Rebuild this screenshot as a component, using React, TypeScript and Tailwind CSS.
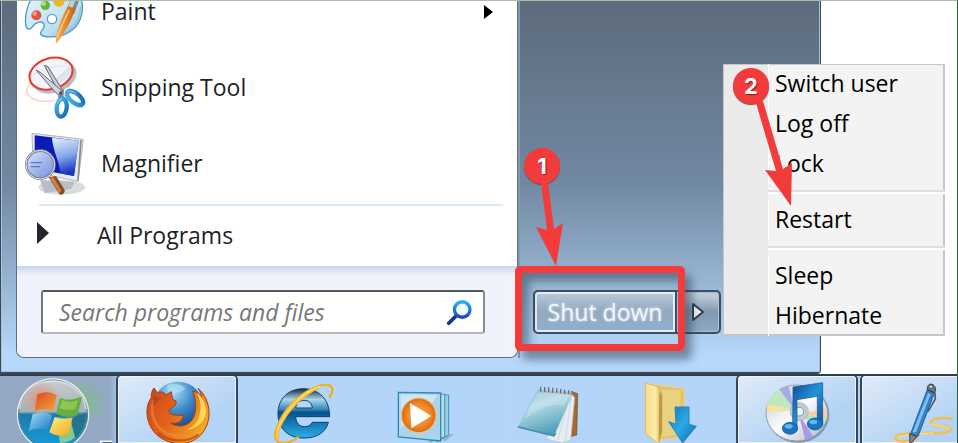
import type { ReactNode } from "react";

type IconProps = { className?: string };

function PaintIcon({ className }: IconProps) {
  return (
    <svg viewBox="72 -78 192 228" className={className} aria-hidden="true">
      <defs>
        <linearGradient id="palette" x1="0" y1="0" x2="1" y2="1">
          <stop offset="0" stopColor="#e6f5fc" />
          <stop offset="0.6" stopColor="#c3e2f3" />
          <stop offset="1" stopColor="#8fc3e2" />
        </linearGradient>
        <linearGradient id="brush" x1="0" y1="0" x2="1" y2="0">
          <stop offset="0" stopColor="#f9b04b" />
          <stop offset="1" stopColor="#c9650f" />
        </linearGradient>
      </defs>
      <path
        d="M104 -20C84 8 72 48 78 78C82 92 92 88 98 80C106 66 128 60 132 74C136 88 118 92 122 102C132 116 180 112 204 98C238 80 252 44 246 6C242 -30 140 -50 104 -20Z"
        fill="url(#palette)"
        stroke="#4f9ac4"
        strokeWidth="4"
      />
      <path d="M176 106C214 94 240 62 242 20" fill="none" stroke="#9cc8de" strokeWidth="6" />
      <circle cx="156" cy="57" r="14" fill="#fff" stroke="#5ba1c8" strokeWidth="4" />
      <circle cx="109" cy="46" r="15" fill="#e2513c" />
      <circle cx="104" cy="41" r="7" fill="#f39a86" />
      <circle cx="136" cy="16" r="14" fill="#67b33c" />
      <circle cx="131" cy="11" r="7" fill="#b4df86" />
      <circle cx="177" cy="3" r="17" fill="#f7b511" />
      <path d="M215 -10L238 0L222 42L198 32Z" fill="#7e8796" />
      <path d="M216 -10L228 -4L212 38L200 32Z" fill="#c6ccd5" />
      <path d="M204 18L226 26C216 60 190 106 168 131C164 104 184 52 204 18Z" fill="url(#brush)" />
      <path d="M208 30C194 58 178 90 172 114" fill="none" stroke="#ffd08a" strokeWidth="4" />
    </svg>
  );
}

function SnippingIcon({ className }: IconProps) {
  return (
    <svg viewBox="72 150 192 228" className={className} aria-hidden="true">
      <defs>
        <linearGradient id="handle" x1="0" y1="0" x2="1" y2="1">
          <stop offset="0" stopColor="#4cb7ea" />
          <stop offset="1" stopColor="#0e6db4" />
        </linearGradient>
      </defs>
      <ellipse cx="144" cy="268" rx="64" ry="36" fill="#fff" stroke="#f6cfc0" strokeWidth="4" transform="rotate(-5 144 268)" />
      <ellipse cx="163" cy="231" rx="69" ry="47" fill="#8a8f98" opacity="0.6" transform="rotate(-20 163 231)" />
      <ellipse cx="153" cy="221" rx="66" ry="46" fill="#f2f4fa" stroke="#e4392f" strokeWidth="6" transform="rotate(-17 153 221)" />
      <path d="M150 250L212 196C218 216 202 242 170 256Z" fill="#dfe5f1" />
      <path d="M98 224C130 206 170 196 208 198" fill="none" stroke="#e3e6ee" strokeWidth="4" />
      <path d="M196 276L232 320L250 322" fill="none" stroke="#b9c0c8" strokeWidth="6" opacity="0.6" />
      <path d="M133 196L144 200L190 274L180 284Z" fill="#c9cdd2" stroke="#63686f" strokeWidth="3" />
      <path d="M108 210L122 218L190 276L178 288L160 270Z" fill="#d3d6da" stroke="#63686f" strokeWidth="3" />
      <path d="M178 274L192 268L190 296L174 294Z" fill="#7c858f" />
      <ellipse cx="185" cy="323" rx="15" ry="27" fill="#fff" stroke="url(#handle)" strokeWidth="13" transform="rotate(7 185 323)" />
      <ellipse cx="225" cy="294" rx="14" ry="29" fill="#fff" stroke="url(#handle)" strokeWidth="13" transform="rotate(-52 225 294)" />
      <circle cx="182" cy="280" r="4" fill="#474d55" />
      <path d="M173 310C174 302 180 298 186 298" fill="none" stroke="#9ddcf8" strokeWidth="3" />
      <path d="M202 276C210 270 222 274 230 282" fill="none" stroke="#9ddcf8" strokeWidth="3" />
    </svg>
  );
}

function MagnifierIcon({ className }: IconProps) {
  return (
    <svg viewBox="72 378 192 228" className={className} aria-hidden="true">
      <defs>
        <linearGradient id="screen" x1="0" y1="0" x2="0.2" y2="1">
          <stop offset="0" stopColor="#e6f3fd" />
          <stop offset="0.55" stopColor="#86a8e8" />
          <stop offset="1" stopColor="#1736c4" />
        </linearGradient>
        <linearGradient id="lens" x1="0" y1="0" x2="1" y2="1">
          <stop offset="0" stopColor="#d7e9fb" />
          <stop offset="1" stopColor="#7489dc" />
        </linearGradient>
      </defs>
      <ellipse cx="185" cy="562" rx="70" ry="22" fill="#d9dbde" />
      <path d="M120 540L224 546L214 566L134 580Z" fill="#b9bec4" />
      <path d="M96 400L250 418L234 544L100 516Z" fill="#e8eaec" stroke="#aeb4b9" strokeWidth="3" />
      <path d="M243 420L234 542" stroke="#858d94" strokeWidth="5" />
      <path d="M104 406L236 422L222 528L104 506Z" fill="#0b1cb6" />
      <path d="M156 413L236 422L222 528L182 520C176 480 158 448 156 413Z" fill="url(#screen)" />
      <path d="M146 532L168 528L194 570C196 580 184 588 178 582Z" fill="#8f4b1e" />
      <path d="M150 534L160 532L184 572L178 578Z" fill="#c98554" />
      <circle cx="121" cy="494" r="42" fill="url(#lens)" stroke="#7c858f" strokeWidth="8" />
      <circle cx="121" cy="494" r="43" fill="none" stroke="#dfe4e9" strokeWidth="3" />
      <path d="M92 488H126M92 500H120" stroke="#6173cf" strokeWidth="4" />
    </svg>
  );
}

function SearchIcon({ className }: IconProps) {
  return (
    <svg viewBox="560 358 80 80" className={className} aria-hidden="true">
      <defs>
        <linearGradient id="glass" x1="0" y1="0" x2="0" y2="1">
          <stop offset="0" stopColor="#27b4ee" />
          <stop offset="1" stopColor="#2145c4" />
        </linearGradient>
      </defs>
      <path d="M590 408L568 430" stroke="#1b3687" strokeWidth="11" strokeLinecap="round" />
      <circle cx="608" cy="389" r="23" fill="#f2fafe" stroke="url(#glass)" strokeWidth="10" />
    </svg>
  );
}

function StartOrb({ className }: IconProps) {
  return (
    <svg viewBox="0 33 336 201" className={className} aria-hidden="true">
      <defs>
        <linearGradient id="orb" x1="0" y1="0" x2="0" y2="1">
          <stop offset="0" stopColor="#c9cdd0" />
          <stop offset="0.46" stopColor="#a3b3b6" />
          <stop offset="0.5" stopColor="#1a7bab" />
          <stop offset="1" stopColor="#14a0dd" />
        </linearGradient>
        <radialGradient id="orbGreen">
          <stop offset="0" stopColor="#77c46a" stopOpacity="0.7" />
          <stop offset="1" stopColor="#77c46a" stopOpacity="0" />
        </radialGradient>
        <radialGradient id="orbRed">
          <stop offset="0" stopColor="#f0866a" stopOpacity="0.8" />
          <stop offset="1" stopColor="#f0866a" stopOpacity="0" />
        </radialGradient>
        <linearGradient id="flagRed" x1="0" y1="0" x2="1" y2="1">
          <stop offset="0" stopColor="#d84a20" />
          <stop offset="1" stopColor="#f7a23c" />
        </linearGradient>
        <linearGradient id="flagBlue" x1="0" y1="0" x2="1" y2="1">
          <stop offset="0" stopColor="#a6ddf7" />
          <stop offset="1" stopColor="#1476c6" />
        </linearGradient>
        <linearGradient id="flagYellow" x1="0" y1="0" x2="1" y2="1">
          <stop offset="0" stopColor="#fff08a" />
          <stop offset="1" stopColor="#f2a516" />
        </linearGradient>
      </defs>
      <circle cx="248" cy="112" r="70" fill="url(#orbGreen)" />
      <circle cx="159" cy="148" r="107" fill="url(#orb)" stroke="#e6edf2" strokeWidth="4" />
      <circle cx="159" cy="148" r="103" fill="none" stroke="#5b7f8e" strokeWidth="3" />
      <circle cx="122" cy="102" r="56" fill="url(#orbRed)" />
      <path d="M170 156C206 166 236 150 258 142C258 190 226 234 180 234Z" fill="#8fd08c" opacity="0.9" />
      <path d="M210 160L258 142C260 170 246 200 226 220Z" fill="#23758f" />
      <path d="M112 88C134 78 152 80 170 90L160 138C142 130 124 130 104 138Z" fill="url(#flagRed)" />
      <path d="M180 98C202 108 224 104 248 92L232 150C210 160 190 156 168 146Z" fill="#67ad45" />
      <path d="M186 104C200 112 220 112 234 104L226 132C208 138 192 134 178 130Z" fill="#8cc84a" />
      <path d="M98 148C120 138 138 140 156 150L146 198C126 188 106 190 86 198Z" fill="url(#flagBlue)" />
      <path d="M164 156C182 164 202 164 218 158L206 206C186 216 164 212 148 202Z" fill="url(#flagYellow)" />
      <path d="M58 132C64 72 108 48 158 48C208 48 252 76 258 132" fill="none" stroke="#fff" strokeWidth="6" opacity="0.5" />
      <path d="M302 234V229H346" fill="none" stroke="#eef3f8" strokeWidth="5" />
      <path d="M308 234H346" stroke="#4f5760" strokeWidth="5" />
    </svg>
  );
}

function FirefoxIcon({ className }: IconProps) {
  return (
    <svg viewBox="354 33 354 201" className={className} aria-hidden="true">
      <defs>
        <radialGradient id="globe" cx="0.4" cy="0.2" r="0.9">
          <stop offset="0" stopColor="#a5def8" />
          <stop offset="0.45" stopColor="#3a87c8" />
          <stop offset="1" stopColor="#0c2c6c" />
        </radialGradient>
        <linearGradient id="fox" x1="0" y1="0" x2="1" y2="0.5">
          <stop offset="0" stopColor="#c8481a" />
          <stop offset="0.5" stopColor="#e2621b" />
          <stop offset="1" stopColor="#f5a51f" />
        </linearGradient>
      </defs>
      <circle cx="534" cy="126" r="76" fill="url(#globe)" />
      <path d="M502 60C520 54 546 58 556 70C548 84 524 80 518 92C510 86 498 76 502 60Z" fill="#b7e5f8" opacity="0.6" />
      <path
        d="M462 69L472 84C482 78 492 80 498 90L514 80C518 92 512 104 528 108C532 122 514 128 506 136C512 156 534 148 550 152C548 170 530 178 512 174C540 192 574 182 584 148C590 124 586 98 578 78C592 80 600 92 604 98C604 88 600 78 594 70C616 88 632 124 626 160C618 208 582 236 538 236C484 234 444 196 441 146C440 124 446 108 454 98C452 88 456 76 462 69Z"
        fill="url(#fox)"
        stroke="#a63b16"
        strokeWidth="3"
      />
      <path d="M462 106C450 130 456 172 486 196C514 218 556 218 582 194" fill="none" stroke="#f28a3a" strokeWidth="8" opacity="0.6" />
      <path d="M590 82C602 106 606 132 596 158C590 176 574 190 560 194C590 192 612 172 618 144C620 118 606 96 590 82Z" fill="#ffd75c" />
      <path d="M474 204C504 230 560 236 596 208" fill="none" stroke="#b94413" strokeWidth="7" opacity="0.7" />
      <path d="M462 83L468 96L486 100C476 104 468 116 460 124C456 112 460 96 462 83Z" fill="#a93a19" opacity="0.5" />
    </svg>
  );
}

function ExplorerIcon({ className }: IconProps) {
  return (
    <svg viewBox="-24 33 354 201" className={className} aria-hidden="true">
      <defs>
        <linearGradient id="ie" x1="0" y1="0" x2="0" y2="1">
          <stop offset="0" stopColor="#10283e" />
          <stop offset="0.22" stopColor="#acd4ec" />
          <stop offset="0.42" stopColor="#3587ba" />
          <stop offset="0.48" stopColor="#07518d" />
          <stop offset="1" stopColor="#2bafe8" />
        </linearGradient>
      </defs>
      <path
        fillRule="evenodd"
        d="M161 71C207 71 239 104 239 155H137C138 176 150 185 164 185C176 185 182 180 187 172H235C228 202 200 219 162 219C112 219 84 188 84 146C84 102 114 71 161 71ZM137 129H187C185 114 177 106 162 106C148 106 139 114 137 129Z"
        fill="url(#ie)"
        stroke="#0b3f70"
        strokeWidth="3"
      />
      <path
        d="M238 98C252 78 250 62 232 60C196 56 130 100 98 152C76 190 68 220 84 230C102 240 126 230 146 216"
        fill="none"
        stroke="#f2b021"
        strokeWidth="7"
      />
      <path d="M206 66C176 78 136 108 108 148C90 174 78 202 82 222" fill="none" stroke="#f7bd33" strokeWidth="11" />
      <path d="M212 64C180 72 136 104 108 146C90 172 78 200 82 216" fill="none" stroke="#ffe27a" strokeWidth="4" />
    </svg>
  );
}

function MediaPlayerIcon({ className }: IconProps) {
  return (
    <svg viewBox="348 33 354 201" className={className} aria-hidden="true">
      <defs>
        <radialGradient id="media">
          <stop offset="0" stopColor="#f9b25c" />
          <stop offset="0.7" stopColor="#ee8424" />
          <stop offset="1" stopColor="#db6a10" />
        </radialGradient>
      </defs>
      <path d="M570 212L614 206L584 230Z" fill="#7e9fb6" opacity="0.6" />
      <path d="M552 86L596 90V210L560 230Z" fill="#9ccde0" stroke="#3f93b8" strokeWidth="3" />
      <path d="M530 84L584 88V216L540 230Z" fill="#b5deed" stroke="#3f93b8" strokeWidth="3" />
      <path d="M445 82L572 84V228L445 216Z" fill="#a9d4e9" stroke="#3589b0" strokeWidth="4" />
      <path d="M452 88L562 90L548 114L452 190Z" fill="#cae7f4" />
      <circle cx="506" cy="151" r="52" fill="url(#media)" stroke="#f6c48d" strokeWidth="3" />
      <path d="M480 114L544 153L484 190Z" fill="#fff" />
    </svg>
  );
}

function NotepadIcon({ className }: IconProps) {
  return (
    <svg viewBox="0 33 354 201" className={className} aria-hidden="true">
      <defs>
        <linearGradient id="note" x1="0" y1="0" x2="0.4" y2="1">
          <stop offset="0" stopColor="#6ab3c4" />
          <stop offset="0.4" stopColor="#b7dde6" />
          <stop offset="1" stopColor="#509fb8" />
        </linearGradient>
      </defs>
      <path d="M246 80L263 86L260 210L236 216Z" fill="#a8682f" stroke="#6e4220" strokeWidth="2" />
      <path d="M240 80L254 98L242 226L216 234L168 222Z" fill="#e6ecef" stroke="#b4c0c9" strokeWidth="2" />
      <path d="M244 92L226 228M236 100L204 226" stroke="#c3d0d8" strokeWidth="2" />
      <path d="M144 75L248 86L192 213L84 186Z" fill="url(#note)" stroke="#9cc3ce" strokeWidth="2" />
      <path d="M144 79L240 88L222 122C170 112 140 140 104 160Z" fill="#d0e9ef" opacity="0.4" />
      <path d="M84 186L192 213L198 204" fill="none" stroke="#3f8ba6" strokeWidth="4" />
      <path d="M148 78L248 86" stroke="#b5bac0" strokeWidth="8" />
      <path
        d="M152 80V65M164 81V66M176 82V67M188 83V68M200 84V70M212 85V72M224 87V74M236 88V76M246 90V78"
        stroke="#6a7078"
        strokeWidth="4"
      />
    </svg>
  );
}

function DownloadsIcon({ className }: IconProps) {
  return (
    <svg viewBox="372 33 354 201" className={className} aria-hidden="true">
      <defs>
        <linearGradient id="folder" x1="0" y1="0" x2="1" y2="0">
          <stop offset="0" stopColor="#f6dc86" />
          <stop offset="0.6" stopColor="#fbecab" />
          <stop offset="1" stopColor="#d3ab4e" />
        </linearGradient>
        <linearGradient id="down" x1="0" y1="0" x2="1" y2="1">
          <stop offset="0" stopColor="#1c76b6" />
          <stop offset="0.5" stopColor="#29a9e8" />
          <stop offset="1" stopColor="#1267ae" />
        </linearGradient>
      </defs>
      <path d="M482 56L583 71V215L500 226Z" fill="#e4c36b" stroke="#ecd58d" strokeWidth="3" />
      <path d="M516 74L572 76V208L516 216Z" fill="#e9d182" />
      <path d="M466 54L500 64C514 74 518 88 516 106V200L506 238L466 204Z" fill="url(#folder)" stroke="#dfbd64" strokeWidth="3" />
      <path d="M508 80L516 92V200L506 232Z" fill="#c1973b" />
      <path d="M555 126H597V178L619 184L578 234L536 170L558 178Z" fill="url(#down)" stroke="#2b83bc" strokeWidth="3" />
    </svg>
  );
}

function ITunesIcon({ className }: IconProps) {
  return (
    <svg viewBox="54 33 354 201" className={className} aria-hidden="true">
      <defs>
        <linearGradient id="disc" x1="0" y1="0" x2="1" y2="1">
          <stop offset="0" stopColor="#c5ccd2" />
          <stop offset="0.5" stopColor="#fafbfc" />
          <stop offset="1" stopColor="#aeb8c1" />
        </linearGradient>
        <linearGradient id="noteBlue" x1="0" y1="0" x2="1" y2="1">
          <stop offset="0" stopColor="#104f98" />
          <stop offset="0.5" stopColor="#2592dc" />
          <stop offset="1" stopColor="#0d4d9c" />
        </linearGradient>
      </defs>
      <ellipse cx="234" cy="148" rx="94" ry="86" fill="#61717f" opacity="0.6" />
      <ellipse cx="230" cy="144" rx="92" ry="84" fill="url(#disc)" stroke="#97a2ac" strokeWidth="3" />
      <path d="M224 136L142 116C148 98 162 82 178 73Z" fill="#bce9c0" />
      <path d="M224 136L178 73L206 62Z" fill="#a9a9ea" />
      <path d="M224 136L142 116L140 142Z" fill="#f4e3a3" />
      <path d="M236 148L320 130L322 158Z" fill="#f5cfa4" />
      <path d="M236 148L322 158L304 194Z" fill="#b7e5bb" />
      <path d="M236 148L280 214L256 226Z" fill="#a999e4" />
      <circle cx="238" cy="140" r="27" fill="#c4cbd2" stroke="#98a5b0" strokeWidth="2" />
      <circle cx="238" cy="140" r="13" fill="#ebf5fb" stroke="#8998a5" strokeWidth="3" />
      <path d="M219 66L308 53V180H292V94L231 104V190H218Z" fill="url(#noteBlue)" stroke="#174f8b" strokeWidth="2" />
      <ellipse cx="210" cy="190" rx="23" ry="18" fill="#1674c2" stroke="#104c88" strokeWidth="2" />
      <ellipse cx="285" cy="177" rx="23" ry="18" fill="#1674c2" stroke="#104c88" strokeWidth="2" />
      <ellipse cx="206" cy="184" rx="12" ry="7" fill="#5eb9ee" />
      <ellipse cx="280" cy="171" rx="12" ry="7" fill="#5eb9ee" />
    </svg>
  );
}

function JournalIcon({ className }: IconProps) {
  return (
    <svg viewBox="426 33 354 201" className={className} aria-hidden="true">
      <path
        d="M694 162C664 154 630 164 632 174C636 186 690 180 692 194C690 210 628 202 586 204C546 206 520 212 526 220C532 232 562 232 592 222"
        fill="none"
        stroke="#f5bf52"
        strokeWidth="8"
        strokeLinecap="round"
      />
      <path d="M634 176C650 184 680 182 688 192M534 216C550 206 600 206 640 204" fill="none" stroke="#ffdd75" strokeWidth="4" />
      <path d="M622 74L644 82L594 214L572 226L572 206Z" fill="#347fca" stroke="#2f5c92" strokeWidth="3" />
      <path d="M624 84L632 88L588 202L578 202Z" fill="#78c3f2" />
      <path d="M622 74C622 58 630 54 640 60C648 66 648 74 644 84Z" fill="#697078" stroke="#34383e" strokeWidth="3" />
      <path d="M645 84L646 102L624 140" fill="none" stroke="#565b62" strokeWidth="5" />
      <path d="M569 206L590 214L570 240Z" fill="#7c8791" stroke="#353c45" strokeWidth="3" />
      <path d="M629 64L636 66" stroke="#e4eaee" strokeWidth="5" />
    </svg>
  );
}

const programs = [
  { name: "Paint", icon: PaintIcon, submenu: true },
  { name: "Snipping Tool", icon: SnippingIcon, submenu: false },
  { name: "Magnifier", icon: MagnifierIcon, submenu: false },
];

const powerGroups = [
  ["Switch user", "Log off", "Lock"],
  ["Restart"],
  ["Sleep", "Hibernate"],
];

const taskbarItems = [
  { name: "Firefox", icon: FirefoxIcon, open: true },
  { name: "Internet Explorer", icon: ExplorerIcon, open: false },
  { name: "Media Player", icon: MediaPlayerIcon, open: false },
  { name: "Notepad", icon: NotepadIcon, open: false },
  { name: "Downloads", icon: DownloadsIcon, open: false },
  { name: "iTunes", icon: ITunesIcon, open: true },
  { name: "Journal", icon: JournalIcon, open: true },
];

function StepBadge({ children }: { children: ReactNode }) {
  return (
    <span className="flex size-9 items-center justify-center rounded-full bg-[#f43b3b] font-[Inter,sans-serif] text-[22px] leading-none font-bold text-white shadow-[0_1px_1px_#7a4a4a] [text-shadow:1px_1px_1px_#8a2020]">
      {children}
    </span>
  );
}

function ProgramList() {
  return (
    <div className="flex min-w-0 flex-1 flex-col rounded-b-lg border-x border-b border-[#5d6f80] bg-white">
      {/* the list is scrolled, so the first row is cut by the top edge */}
      <ul className="-mt-[26px]">
        {programs.map(({ name, icon: Icon, submenu }) => (
          <li key={name}>
            <button className="flex h-[76px] w-full items-center gap-[13px] pr-6 pl-[7px] text-left">
              <Icon className="h-[76px] w-16 shrink-0" />
              <span className="flex-1 pb-[2px] leading-6">{name}</span>
              {submenu && (
                <svg viewBox="0 0 9 14" className="h-[14px] w-[9px]" aria-hidden="true">
                  <path d="M0 0L9 7L0 14Z" fill="#000" />
                </svg>
              )}
            </button>
          </li>
        ))}
      </ul>
      <hr className="mt-[2px] mr-[14px] ml-[22px] border-t-2 border-[#dbe8f8]" />
      <button className="flex h-[60px] items-center gap-12 pl-5 text-left">
        <svg viewBox="0 0 12 22" className="mb-[6px] h-[22px] w-3" aria-hidden="true">
          <path d="M0 0L12 11L0 22Z" fill="#22262b" />
        </svg>
        <span className="pb-[2px]">All Programs</span>
      </button>
      <div className="flex-1 rounded-b-lg bg-linear-to-b from-[#c3d6ea] via-[#f0f3fb] via-10% to-[#f0f3fb] pt-6 pr-8 pb-[23px] pl-6">
        <div className="flex h-11 items-center rounded-[3px] border-2 border-t-[#55585b] border-r-[#8a8d90] border-b-[#b5b8bb] border-l-[#74777a] bg-white pr-[10px] pl-4">
          <input
            type="text"
            aria-label="Search programs and files"
            placeholder="Search programs and files"
            className="min-w-0 flex-1 bg-transparent italic outline-none placeholder:text-[#777]"
          />
          <button aria-label="Search">
            <SearchIcon className="size-[27px]" />
          </button>
        </div>
      </div>
    </div>
  );
}

function PowerButtons() {
  return (
    <div className="relative flex h-11">
      <button className="w-36 rounded-l-[5px] border-2 border-[#3f4f60] bg-linear-to-b from-[#b6c7d7] from-5% via-[#93a8bc] via-50% to-[#8fb0d0] text-[#f2f7fb] shadow-[inset_0_0_0_2px_#e3edf5] [text-shadow:0_0_3px_#dce8f2]">
        Shut down
      </button>
      <button
        aria-label="More options"
        className="-ml-[2px] flex w-[46px] items-center justify-center rounded-r-[5px] border-2 border-[#3f4f60] bg-linear-to-b from-[#bccbd9] from-10% via-[#8298ae] via-50% to-[#8aaccc] shadow-[inset_0_0_0_1px_#a9bfd3]"
      >
        <svg viewBox="0 0 14 20" className="h-5 w-[14px]" aria-hidden="true">
          <path d="M2 2L12 10L2 18Z" fill="#eef3f8" stroke="#2f3d4c" strokeWidth="2" strokeLinejoin="round" />
        </svg>
      </button>

      {/* step 1 highlight */}
      <div className="pointer-events-none absolute -top-6 -left-[18px] h-[85px] w-[170px] rounded-[5px] border-[7px] border-[#f43b3b] shadow-[7px_9px_8px_#2c3e5080,inset_7px_8px_8px_#2c3e5080]">
        <div className="absolute -top-[125px] left-[2px]">
          <StepBadge>1</StepBadge>
          <svg viewBox="0 0 44 84" className="-mt-px ml-3 h-[84px] w-11" aria-hidden="true">
            <path d="M5 0H12L18 46L27 40L20 83L0 44L11 47Z" fill="#f43b3b" />
          </svg>
        </div>
      </div>
    </div>
  );
}

function PowerMenu() {
  return (
    <div className="absolute top-16 right-[13px] w-[222px] bg-linear-to-r from-[#ebebeb] from-[45px] to-[#f3f3f3] to-[45px] text-black shadow-[inset_1px_1px_#c6c6ca,inset_-2px_-2px_#c6c6ca]">
      {powerGroups.map((group, i) => (
        <ul key={group[0]}>
          {i > 0 && (
            <li className="ml-[45px] h-4 py-[6px]">
              <hr className="h-1 border-t-2 border-b-2 border-t-[#dedede] border-b-white" />
            </li>
          )}
          {group.map((item) => (
            <li key={item} className="pl-[45px]">
              <button className="block h-10 w-full pb-[2px] pl-[7px] text-left leading-[38px] shadow-[inset_1px_0_#fff]">
                {item}
              </button>
            </li>
          ))}
        </ul>
      ))}

      {/* step 2 pointer */}
      <div className="pointer-events-none absolute top-1 left-[10px]">
        <StepBadge>2</StepBadge>
        <svg viewBox="0 0 28 108" className="-mt-[3px] ml-8 h-[108px] w-7" aria-hidden="true" overflow="visible">
          <path d="M-9 2L-2 0L18 68L27 62L26 105L0 69L11 70Z" fill="#f43b3b" />
        </svg>
      </div>
    </div>
  );
}

function Taskbar() {
  return (
    <nav className="flex h-[69px] gap-[6px] overflow-hidden border-t-2 border-[#2f3e4e] bg-linear-to-r from-[#93a9c3] from-[110px] to-[#b3d5fa] to-[122px]">
      <button aria-label="Start" className="w-28 shrink-0">
        <StartOrb className="h-[67px] w-28" />
      </button>
      {taskbarItems.map(({ name, icon: Icon, open }) => (
        <button
          key={name}
          aria-label={name}
          className={`h-[67px] w-[118px] shrink-0 ${
            open
              ? "rounded-t-[4px] bg-linear-to-br from-[#e0ebf7] to-[#b3d3f5] to-70% shadow-[0_0_0_2px_#35465a,inset_0_0_0_1px_#eaf4fd]"
              : ""
          }`}
        >
          <Icon className="h-[67px] w-[118px]" />
        </button>
      ))}
    </nav>
  );
}

export default function App() {
  return (
    <div className="relative overflow-hidden bg-white font-['Open_Sans','Noto_Sans',sans-serif] text-[23px] leading-8 text-[#1e1e28]">
      <div className="mr-[137px] flex rounded-br-sm border-x border-b-2 border-[#3a4a5a] bg-linear-to-b from-[#5c6b7b] via-[#7289a3] via-50% to-[#b6d9fb] to-96%">
        <div className="flex flex-1 border-x border-b border-[#a9c0d6] pb-[13px] pl-[14px]">
          <ProgramList />
          <div className="flex w-[301px] items-end border-l-2 border-[#8599ac] pb-6 pl-[13px]">
            <PowerButtons />
          </div>
        </div>
      </div>
      <Taskbar />
      <PowerMenu />
      <div className="pointer-events-none absolute inset-0 border-t border-r border-t-[#a7bda4] border-r-[#2c5f35]" />
    </div>
  );
}
